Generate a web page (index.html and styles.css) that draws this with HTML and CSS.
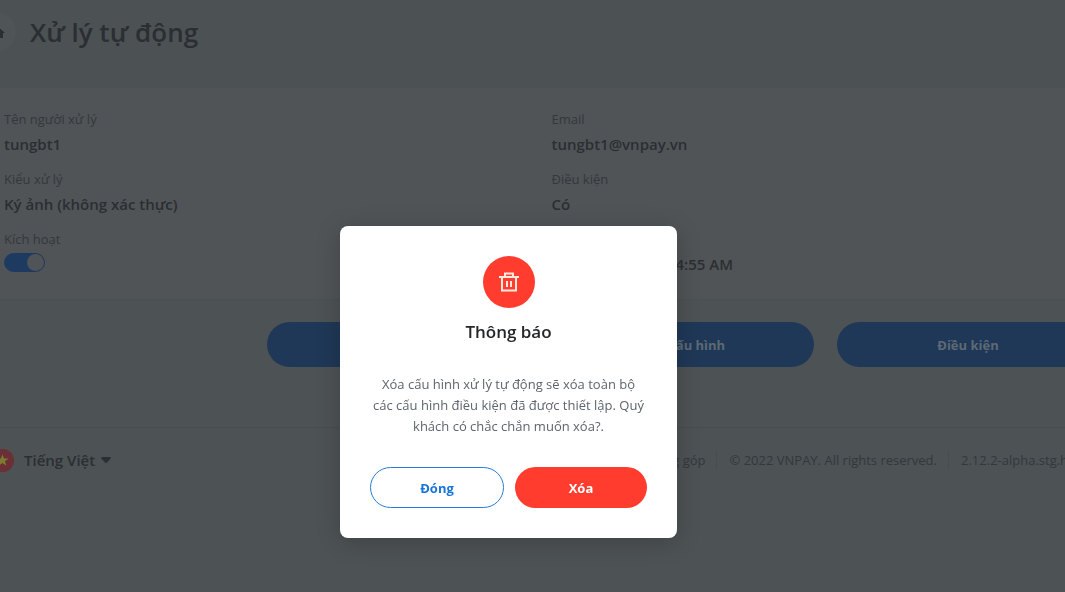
FILE: index.html
```html
<!DOCTYPE html>
<html lang="vi">
<head>
<meta charset="utf-8">
<meta name="viewport" content="width=device-width, initial-scale=1">
<title>Xử lý tự động</title>
<link rel="stylesheet" href="styles.css">
</head>
<body>
<div class="page">
  <header class="page-header">
    <a class="home" href="#" aria-label="Home">
      <svg width="18" height="16" viewBox="0 0 18 16" fill="currentColor"><path d="M9 1 0 9h2v5h5v-4h4v4h5V9h2z"/></svg>
    </a>
    <h1 class="title">Xử lý tự động</h1>
  </header>
  <main>
    <section class="card">
      <dl class="details">
        <div class="field"><dt>Tên người xử lý</dt><dd>tungbt1</dd></div>
        <div class="field"><dt>Email</dt><dd>tungbt1@vnpay.vn</dd></div>
        <div class="field"><dt>Kiểu xử lý</dt><dd>Ký ảnh (không xác thực)</dd></div>
        <div class="field"><dt>Điều kiện</dt><dd>Có</dd></div>
        <div class="field"><dt><label for="active">Kích hoạt</label></dt><dd class="toggle-row"><input class="toggle" id="active" type="checkbox" role="switch" checked></dd></div>
        <div class="field"><dt>&nbsp;</dt><dd class="time">4:55 AM</dd></div>
      </dl>
    </section>
    <div class="actions">
      <button class="action" type="button" aria-label="Xóa"></button>
      <button class="action" type="button">Sửa cấu hình</button>
      <button class="action" type="button">Điều kiện</button>
    </div>
  </main>
  <footer class="footer">
    <button class="language" type="button">
      <svg class="flag" viewBox="0 0 24 24"><circle cx="12" cy="12" r="12" fill="#6b2f36"/><path d="m12 5.5 1.6 4.5h4.8l-3.8 2.9 1.4 4.6-4-2.8-4 2.8 1.4-4.6L5.600 10h4.800z" fill="#7d7a31"/></svg>
      <span>Tiếng Việt</span>
      <svg class="caret" viewBox="0 0 10 6"><path d="M1 0h8q1.500 .6.500 1.700L6 5.500q-1 1-2 0L.5 1.700Q-.5.600 1 0z" fill="currentColor"/></svg>
    </button>
    <div class="legal">
      <a href="#">Đóng góp</a>
      <span>© 2022 VNPAY. All rights reserved.</span>
      <span class="version">2.12.2-alpha.stg.h</span>
    </div>
  </footer>
</div>
<div class="overlay">
  <div class="modal" role="dialog" aria-modal="true" aria-labelledby="modal-title">
    <div class="modal-icon">
      <svg width="20" height="20" viewBox="0 0 20 20" fill="none" stroke="#ffe9df" stroke-width="2"><path d="M0 5h20M3 5v13.500h14V5M6 5V1.500h8V5"/><path d="M8 9v6M12 9v6"/></svg>
    </div>
    <h2 class="modal-title" id="modal-title">Thông báo</h2>
    <p class="modal-text">Xóa cấu hình xử lý tự động sẽ xóa toàn bộ<br>các cấu hình điều kiện đã được thiết lập. Quý khách có chắc chắn muốn xóa?.</p>
    <div class="modal-actions">
      <button class="button button-outline" type="button">Đóng</button>
      <button class="button button-danger" type="button">Xóa</button>
    </div>
  </div>
</div>
</body>
</html>
```
FILE: styles.css
```css
* { box-sizing: border-box; }
body {
  margin: 0;
  min-height: 100vh;
  overflow: hidden;
  background: #4d5255;
  color: #2b2e32;
  font: 13px/20px "Open Sans", "Noto Sans", sans-serif;
}
button { font: inherit; cursor: pointer; }
a { color: inherit; text-decoration: none; }
.page { margin-right: -34px; }
.page-header {
  display: flex;
  align-items: center;
  gap: 14px;
  height: 88px;
  padding-bottom: 24px;
  background: #4c5154;
}
.home {
  display: flex;
  flex: none;
  align-items: center;
  justify-content: center;
  width: 40px;
  height: 40px;
  margin-left: -24px;
  border-radius: 50%;
  background: #4f5457;
}
.title { margin: 0; font-size: 26px; line-height: 36px; font-weight: 600; }
.card { background: #505457; padding: 21px 0 20px 4px; border-bottom: 1px solid #4c5053; }
.details { display: grid; grid-template-columns: 1fr 1fr; gap: 10px 0; margin: 0; }
.field { height: 50px; }
dt { color: #33383c; line-height: 20px; }
dd { margin: 0; padding-top: 4px; font-size: 15px; line-height: 22px; font-weight: 600; }
.toggle-row { line-height: 0; }
.time { padding-left: 124px; }
.toggle {
  appearance: none;
  display: flex;
  align-items: center;
  justify-content: flex-end;
  width: 41px;
  height: 19px;
  margin: 0;
  border: 1px solid #1f3a60;
  border-radius: 10px;
  background: #1f3a60;
}
.toggle::before { content: ""; width: 17px; height: 17px; border-radius: 50%; background: #505457; }
.actions { display: flex; justify-content: flex-end; gap: 23px; padding: 22px 0 60px; }
.action {
  width: 262px;
  height: 45px;
  border: 0;
  border-radius: 23px;
  background: #1f3857;
  color: #5d6975;
  font-weight: 700;
}
.footer {
  display: flex;
  justify-content: space-between;
  align-items: center;
  height: 65px;
  border-top: 1px solid #484d50;
}
.language {
  display: flex;
  align-items: center;
  margin-left: -9px;
  padding: 0;
  border: 0;
  background: none;
  color: inherit;
  font-size: 15px;
  font-weight: 600;
}
.flag { width: 23px; height: 23px; margin-right: 10px; }
.caret { width: 10px; height: 6px; margin-left: 6px; }
.legal { display: flex; color: #33383c; }
.legal > * + * { margin-left: 11px; padding-left: 12px; border-left: 1px solid #484d50; }
.version { width: 151px; white-space: nowrap; }
.overlay {
  position: fixed;
  inset: 0;
  display: flex;
  align-items: center;
  justify-content: center;
  padding: 172px 48px 0 0;
}
.modal {
  width: 337px;
  padding: 30px;
  border-radius: 8px;
  background: #fff;
  box-shadow: 0 4px 24px rgba(0, 0, 0, .2);
  text-align: center;
}
.modal-icon {
  display: flex;
  align-items: center;
  justify-content: center;
  width: 52px;
  height: 52px;
  margin: 0 auto;
  border-radius: 50%;
  background: #ff3c2e;
}
.modal-title { margin: 12px 0 30px; color: #242628; font-size: 17px; line-height: 24px; font-weight: 600; }
.modal-text { margin: 0 0 30px; color: #5d656d; line-height: 21px; }
.modal-actions { display: flex; gap: 11px; }
.button { flex: 1; height: 41px; border: 0; border-radius: 21px; font-weight: 700; }
.button-outline { border: 1px solid #277bd6; background: #fff; color: #1976d8; }
.button-danger { background: #ff3c2e; color: #fff; }
```
